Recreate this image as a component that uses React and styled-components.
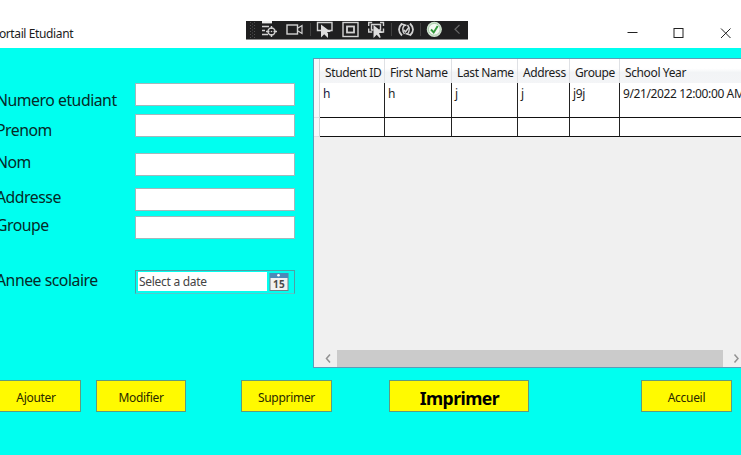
import React from "react";
import styled, { createGlobalStyle } from "styled-components";

const Global = createGlobalStyle`
  *, *::before, *::after { box-sizing: border-box; }
  html, body { margin: 0; padding: 0; overflow: hidden; }
  button, input { font: inherit; color: inherit; }
`;

const Window = styled.div`
  width: 741px;
  height: 455px;
  overflow: hidden;
  display: flex;
  flex-direction: column;
  background: #00fff0;
  font-family: "Noto Sans", "Open Sans", sans-serif;
  font-size: 12px;
  letter-spacing: -0.38px;
  color: #1c1c1c;
`;

const TitleBar = styled.header`
  height: 48px;
  flex: none;
  display: flex;
  background: #fff;
`;

const Title = styled.div`
  width: 254px;
  margin: 25px 0 0 -8px;
  line-height: 17px;
  white-space: nowrap;
`;

const DebugBar = styled.div`
  width: 222px;
  height: 19px;
  margin-top: 21px;
  background: #1f1f20;
  border-bottom: 1px solid #8e8e8e;
  svg { display: block; }
`;

const Controls = styled.div`
  display: flex;
  margin-left: auto;
  padding-top: 26px;
  svg { display: block; }
`;

const Body = styled.main`
  display: flex;
  height: 332px;
  flex: none;
`;

const Labels = styled.div`
  width: 139px;
  margin-left: -4px;
  flex: none;
`;

const Label = styled.label`
  display: block;
  height: 22px;
  line-height: 22px;
  margin-top: ${(p) => p.$gap}px;
  font-size: 15.8px;
  letter-spacing: -0.48px;
  white-space: nowrap;
  color: #062a28;
`;

const Fields = styled.div`
  width: 160px;
  flex: none;
`;

const Field = styled.input`
  display: block;
  width: 160px;
  height: 23px;
  margin: ${(p) => p.$gap}px 0 0;
  padding: 0 3px;
  border: 1px solid #a3b8bb;
  border-radius: 0;
  background: #fff;
  outline: none;
`;

const DatePicker = styled.div`
  display: flex;
  align-items: center;
  width: 160px;
  height: 24px;
  margin-top: 31px;
  padding-left: 2px;
  border: 1px solid #4f9fa5;
  border-bottom-color: #55c9cc;
`;

const DateText = styled.div`
  width: 129px;
  height: 19px;
  padding-left: 1px;
  margin-right: 2px;
  line-height: 20px;
  letter-spacing: -0.28px;
  background: #fff;
  color: #444;
  white-space: nowrap;
`;

const Grid = styled.section`
  width: 430px;
  height: 310px;
  margin: 10px 0 0 18px;
  flex: none;
  display: flex;
  flex-direction: column;
  border: 1px solid #5d9cb8;
  background: #f0f0f0;
`;

const Row = styled.div`
  display: grid;
  grid-template-columns: 6px 65px 67px 66px 52px 50px 1fr;
  height: ${(p) => p.$height}px;
  flex: none;
`;

const HeadCell = styled.div`
  padding-left: 5px;
  line-height: 27px;
  white-space: nowrap;
  background: linear-gradient(#fff 0 35%, #f2f4f6 50%, #f4f5f7);
  border-right: 1px solid #dfe1e5;
  border-bottom: 1px solid #d5d8dc;
`;

const RowHead = styled.div`
  background: #f7f8fa;
  border-right: 1px solid #d0d3d8;
  border-bottom: 1px solid #dfe1e5;
`;

const Cell = styled.div`
  padding: 1px 0 0 3px;
  line-height: 19px;
  white-space: nowrap;
  overflow: hidden;
  background: #fff;
  color: ${(p) => p.$color || "#1c1c1c"};
  border-right: 1px solid #222;
  border-bottom: 1px solid #111;
`;

const ScrollBar = styled.div`
  display: flex;
  height: 17px;
  margin-top: auto;
  padding-left: 7px;
  svg { display: block; width: 16px; flex: none; }
`;

const Thumb = styled.div`
  width: 386px;
  background: #cbcbcb;
`;

const Actions = styled.footer`
  display: flex;
  flex: none;
  height: 32px;
`;

const Action = styled.button`
  width: ${(p) => p.$width}px;
  height: 32px;
  margin: 0 0 0 ${(p) => p.$gap}px;
  padding: 3px 0 0;
  flex: none;
  border: 1px solid #5d9c80;
  border-radius: 0;
  background: #fffa00;
  color: #2a2900;
  line-height: 20px;
  letter-spacing: -0.3px;
  ${(p) => p.$strong && "font-size: 17.6px; font-weight: 700; letter-spacing: -0.55px; color: #000;"}
`;

const DebugIcons = () => (
  <svg width="222" height="18" viewBox="0 0 222 18" fill="none" stroke="#d2d2d2" strokeWidth="1.4">
    <g stroke="#505050" strokeWidth="1" strokeDasharray="1 2">
      <path d="M4.500 1V17M8.500 1V17" />
      <path d="M6.500 2.500V17" />
    </g>
    <path d="M16 1.200h10" stroke="#eee" strokeWidth="2.400" />
    <path d="M16 5.500h7M16 9.500h3M16 13.500h6" />
    <circle cx="25.500" cy="10.500" r="3.500" />
    <path d="M25.500 5v3M25.500 13v3M20 10.500h3.500M27.500 10.500H31" />
    <circle cx="25.500" cy="10.500" r="0.800" fill="#d2d2d2" stroke="none" />
    <rect x="41" y="4" width="10.500" height="9" />
    <path d="M52 7l4-2.500v8L52 10" strokeWidth="1.200" />
    <path d="M64.500 2v13M145.500 2v13M174.500 2v13" stroke="#404040" strokeWidth="1" />
    <path d="M75.500 9.500h-4v-8h14.500v8h-4" />
    <path d="M75 3.500v13l3.200-3.200L82 17v-4.500l-1-1.500h4z" fill="#ddd" stroke="none" />
    <rect x="97" y="1.500" width="15" height="14" />
    <rect x="101" y="5.500" width="7" height="6" strokeWidth="1.800" />
    <path d="M122.700 5V1.500h3.500M134 1.500h3.500V5M122.700 7.500v3.500h3.500M137.500 7.500v3.500H134" />
    <path d="M127.500 9h-2V3.500h9V9h-1.500" />
    <path d="M127.500 4v13l3.200-3.200 3 3.200 1-.8-1.700-4.200h4.200z" fill="#ddd" stroke="none" />
    <path d="M156 2.500q-6 6 0 12M164 2.500q6 6 0 12" strokeWidth="1.800" />
    <path d="M158.500 4q-3.500 4.500 0 9M161.500 4q3.500 4.500 0 9M155.500 3l5 1.500M159.500 12.500l5 1.500" strokeWidth="1.500" />
    <path d="M157.500 8.800l2 2 3.500-4.500" strokeWidth="1.500" />
    <circle cx="188.300" cy="8.300" r="7" fill="#f4f8f3" stroke="#cfe0ce" strokeWidth="1.200" />
    <circle cx="188.300" cy="8.300" r="5.900" stroke="#86bc88" strokeWidth="0.700" />
    <path d="M185 8.500l2.700 3 4-6.500" stroke="#329a3a" strokeWidth="1.900" />
    <path d="M213.500 4l-4.500 4.300 4.500 4.300" stroke="#686868" strokeWidth="1.200" />
  </svg>
);

const CaptionIcons = () => (
  <svg width="120" height="14" viewBox="0 0 120 14" fill="none" stroke="#222">
    <path d="M6.500 6.500h10" />
    <rect x="53" y="2.500" width="9" height="9" />
    <path d="M100 2.500l9.500 9.500M109.500 2.500L100 12" />
  </svg>
);

const CalendarIcon = () => (
  <svg width="20" height="20" viewBox="0 0 20 20">
    <rect x="1" y="1.500" width="18" height="17" fill="#f1f1f1" stroke="#777d85" />
    <rect x="1" y="1" width="18" height="5" fill="#4d89b8" />
    <circle cx="9.500" cy="3.200" r="1.300" fill="#fff" />
    <text x="10" y="15.500" textAnchor="middle" fontFamily="Open Sans, sans-serif" fontSize="10" fontWeight="700" letterSpacing="0.3" fill="#4a4a4a">15</text>
  </svg>
);

const Arrow = ({ d }) => (
  <svg width="16" height="17" viewBox="0 0 16 17" fill="none" stroke="#929292" strokeWidth="1.500">
    <path d={d} />
  </svg>
);

const labels = [
  ["Numero etudiant", 40.5], ["Prenom", 8.5], ["Nom", 9.5],
  ["Addresse", 13], ["Groupe", 6], ["Annee scolaire", 33],
];
const fieldGaps = [35.4, 8, 15.5, 12, 5];
const columns = ["Student ID", "First Name", "Last Name", "Address", "Groupe", "School Year"];
const student = ["h", "h", "j", "j", "j9j", "9/21/2022 12:00:00 AM"];

export default function App() {
  return (
    <Window>
      <Global />
      <TitleBar>
        <Title>Portail Etudiant</Title>
        <DebugBar><DebugIcons /></DebugBar>
        <Controls><CaptionIcons /></Controls>
      </TitleBar>
      <Body>
        <Labels>
          {labels.map(([text, gap]) => <Label key={text} $gap={gap}>{text}</Label>)}
        </Labels>
        <Fields>
          {fieldGaps.map((gap, i) => <Field key={i} $gap={gap} aria-label={labels[i][0]} />)}
          <DatePicker>
            <DateText>Select a date</DateText>
            <CalendarIcon />
          </DatePicker>
        </Fields>
        <Grid>
          <Row $height={24}>
            <RowHead />
            {columns.map((c) => <HeadCell key={c}>{c}</HeadCell>)}
          </Row>
          <Row $height={35}>
            <RowHead />
            {student.map((v, i) => <Cell key={i} $color={i === 0 ? "#14143c" : undefined}>{v}</Cell>)}
          </Row>
          <Row $height={19}>
            <RowHead />
            {columns.map((c) => <Cell key={c} />)}
          </Row>
          <ScrollBar>
            <Arrow d="M9 4.500L5.500 8.500 9 12.500" />
            <Thumb />
            <Arrow d="M11.500 4.500L15 8.500l-3.500 4" />
          </ScrollBar>
        </Grid>
      </Body>
      <Actions>
        <Action $width={90} $gap={-9}>Ajouter</Action>
        <Action $width={90} $gap={15}>Modifier</Action>
        <Action $width={91} $gap={55}>Supprimer</Action>
        <Action $width={140} $gap={57.4} $strong>Imprimer</Action>
        <Action $width={91} $gap={111.6}>Accueil</Action>
      </Actions>
    </Window>
  );
}
